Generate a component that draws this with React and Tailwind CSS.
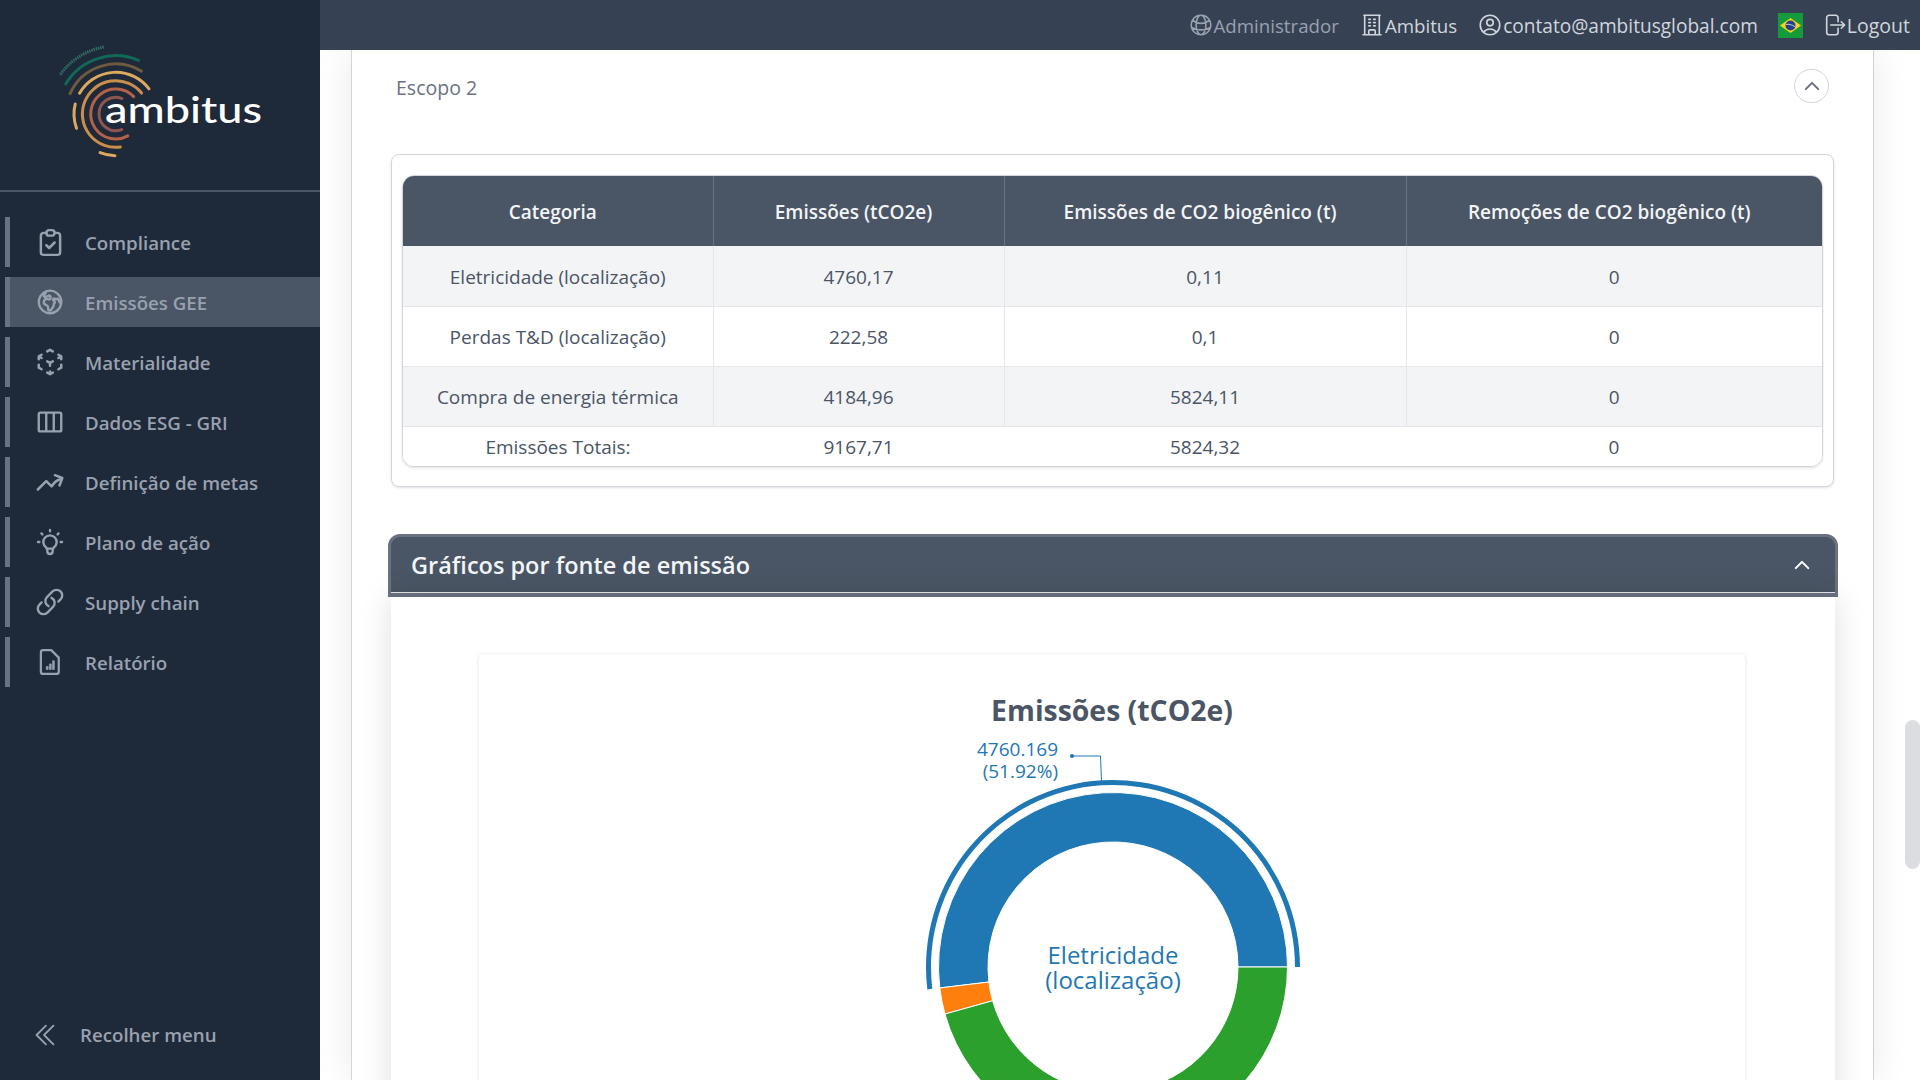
import React from "react";
import {
  HiOutlineGlobeEuropeAfrica,
  HiOutlineCubeTransparent,
  HiOutlineViewColumns,
  HiOutlineArrowTrendingUp,
  HiOutlineLink,
  HiOutlineChevronDoubleLeft,
  HiOutlineGlobeAlt,
  HiOutlineBuildingOffice,
  HiOutlineUserCircle,
  HiOutlineArrowRightOnRectangle,
  HiOutlineChevronUp,
} from "react-icons/hi2";
import { TbBulb, TbClipboardCheck } from "react-icons/tb";

function ReportIcon({ size, className }) {
  return (
    <svg width={size} height={size} viewBox="0 0 24 24" fill="none" stroke="currentColor" strokeWidth="1.8" strokeLinejoin="round" className={className}>
      <path d="M6.5 2.5h6.5l6 6v11.2a1.8 1.8 0 0 1-1.8 1.8H6.5a1.8 1.8 0 0 1-1.8-1.8V4.300a1.800 1.800 0 0 1 1.800-1.800z" />
      <path d="M9 15.500h1.500v2.500H9zM11.500 13.500H13V18h-1.500zM14 11h1.500v7H14z" fill="currentColor" strokeWidth="0.5" />
    </svg>
  );
}

const menu = [
  { label: "Compliance", Icon: TbClipboardCheck, size: 33, stroke: 1.8 },
  { label: "Emissões GEE", Icon: HiOutlineGlobeEuropeAfrica, size: 30, stroke: 1.9 },
  { label: "Materialidade", Icon: HiOutlineCubeTransparent, size: 30, stroke: 2 },
  { label: "Dados ESG - GRI", Icon: HiOutlineViewColumns, size: 30, stroke: 1.9 },
  { label: "Definição de metas", Icon: HiOutlineArrowTrendingUp, size: 30, stroke: 2 },
  { label: "Plano de ação", Icon: TbBulb, size: 32, stroke: 1.8 },
  { label: "Supply chain", Icon: HiOutlineLink, size: 30, stroke: 1.9 },
  { label: "Relatório", Icon: ReportIcon, size: 30 },
];

const rows = [
  ["Eletricidade (localização)", "4760,17", "0,11", "0"],
  ["Perdas T&D (localização)", "222,58", "0,1", "0"],
  ["Compra de energia térmica", "4184,96", "5824,11", "0"],
];

function polar(cx, cy, r, deg) {
  const a = (deg * Math.PI) / 180;
  return [cx + r * Math.cos(a), cy - r * Math.sin(a)];
}

// arc going counter-clockwise from a0 to a1 (degrees, 0 = right)
function arc(cx, cy, r, a0, a1) {
  const [x0, y0] = polar(cx, cy, r, a0);
  const [x1, y1] = polar(cx, cy, r, a1);
  const large = a1 - a0 > 180 ? 1 : 0;
  return `M${x0} ${y0}A${r} ${r} 0 ${large} 0 ${x1} ${y1}`;
}

function sector(cx, cy, r0, r1, a0, a1) {
  const [x0, y0] = polar(cx, cy, r1, a0);
  const [x1, y1] = polar(cx, cy, r1, a1);
  const [x2, y2] = polar(cx, cy, r0, a1);
  const [x3, y3] = polar(cx, cy, r0, a0);
  const large = a1 - a0 > 180 ? 1 : 0;
  return `M${x0} ${y0}A${r1} ${r1} 0 ${large} 0 ${x1} ${y1}L${x2} ${y2}A${r0} ${r0} 0 ${large} 1 ${x3} ${y3}Z`;
}

function Logo() {
  const cx = 65.7;
  const cy = 74;
  const arcs = [
    [16.7, 68, 291, "#8f5651"],
    [25, 44, 299, "#b4614a"],
    [33.3, 39, 278, "#c98f4d"],
    [41.7, 37, 150, "#dca95f"],
    [41.7, 166, 200, "#dca95f"],
    [41.7, 248, 269, "#dca95f"],
    [50, 59, 156, "#6e5a3f"],
    [58.3, 67, 149, "#0f6a58"],
  ];
  return (
    <svg width="230" height="125" viewBox="0 0 230 125" className="block">
      {arcs.map(([r, a0, a1, color], i) => (
        <path key={i} d={arc(cx, cy, r, a0, a1)} fill="none" stroke={color} strokeWidth="3" strokeLinecap="round" />
      ))}
      <path d={arc(cx, cy, 68, 100, 145)} fill="none" stroke="#2f6e62" strokeWidth="3" strokeDasharray="1.5 0.8" />
      <text x="55" y="83" textLength="157" lengthAdjust="spacingAndGlyphs" fill="#ffffff" fontSize="36" fontWeight="500" fontFamily="Lato, sans-serif">
        ambitus
      </text>
    </svg>
  );
}

function Flag() {
  return (
    <svg width="25" height="25" viewBox="0 0 25 25" className="block">
      <rect width="25" height="25" fill="#169b3c" />
      <polygon points="12.5,5 23,12.5 12.5,20 2,12.5" fill="#f7d417" />
      <circle cx="12.5" cy="12.5" r="5" fill="#25408f" />
      <path d="M8 11.5c3-.6 6 .2 9 2.2" stroke="#e8eef5" strokeWidth="0.8" fill="none" />
    </svg>
  );
}

function Donut() {
  const cx = 231;
  const cy = 232;
  return (
    <svg width="460" height="360" viewBox="0 0 460 360" className="-mt-[2px] block mx-auto">
      <path d={sector(cx, cy, 125, 174.5, 0, 186.9)} fill="#1f77b4" stroke="#ffffff" strokeWidth="1" />
      <path d={sector(cx, cy, 125, 174.5, 186.9, 195.65)} fill="#ff7f0e" stroke="#ffffff" strokeWidth="1" />
      <path d={sector(cx, cy, 125, 174.5, 195.65, 360)} fill="#2ca02c" stroke="#ffffff" strokeWidth="1" />
      <path d={sector(cx, cy, 182, 187, 0, 186.9)} fill="#1f77b4" />
      <circle cx="190" cy="21" r="2" fill="#1f77b4" />
      <path d="M190 21H218.5L219.5 46" fill="none" stroke="#1f77b4" strokeWidth="1" />
      <g fill="#1f77b4" fontFamily="'Open Sans', sans-serif">
        <text textAnchor="end" fontSize="19">
          <tspan x="176" y="21">4760.169</tspan>
          <tspan x="176" y="43">(51.92%)</tspan>
        </text>
        <text textAnchor="middle" fontSize="24">
          <tspan x={cx} y="229">Eletricidade</tspan>
          <tspan x={cx} y="254">(localização)</tspan>
        </text>
      </g>
    </svg>
  );
}

function ScopeTable() {
  return (
    <div className="overflow-hidden rounded-xl border border-gray-300 shadow-sm">
      <table className="w-full table-fixed border-collapse text-center text-[19px] text-gray-600">
        <colgroup>
          <col className="w-[310px]" />
          <col className="w-[291px]" />
          <col className="w-[402px]" />
          <col />
        </colgroup>
        <thead>
          <tr className="h-[70px] bg-gray-600 text-gray-100">
            <th className="border-r border-gray-500 pt-[3px] pr-[10px] font-semibold">Categoria</th>
            <th className="border-r border-gray-500 pt-[3px] pr-[10px] font-semibold">Emissões (tCO2e)</th>
            <th className="border-r border-gray-500 pt-[3px] pr-[10px] font-semibold">Emissões de CO2 biogênico (t)</th>
            <th className="pt-[3px] pr-[10px] font-semibold">Remoções de CO2 biogênico (t)</th>
          </tr>
        </thead>
        <tbody>
          {rows.map((row, i) => (
            <tr key={row[0]} className={`h-[60px] border-b border-gray-200 ${i % 2 === 0 ? "bg-gray-100" : "bg-white"}`}>
              {row.map((cell, j) => (
                <td key={j} className={j < 3 ? "border-r border-gray-200 pt-[2px]" : "pt-[2px]"}>{cell}</td>
              ))}
            </tr>
          ))}
          <tr className="h-[40px] bg-white">
            <td className="pt-[2px]">Emissões Totais:</td>
            <td className="pt-[2px]">9167,71</td>
            <td className="pt-[2px]">5824,32</td>
            <td className="pt-[2px]">0</td>
          </tr>
        </tbody>
      </table>
    </div>
  );
}

export default function App() {
  return (
    <div className="flex h-screen w-screen overflow-hidden bg-white font-['Open_Sans',sans-serif]">
      <aside className="flex h-full w-[320px] shrink-0 flex-col bg-gray-800">
        <div className="h-[192px] shrink-0 border-b-2 border-gray-600 pt-[40px] pl-[50px]">
          <Logo />
        </div>
        <nav className="flex flex-col gap-[10px] pt-[25px] pl-[5px]">
          {menu.map(({ label, Icon, size, stroke }) => (
            <a
              key={label}
              className={`flex h-[50px] items-center gap-[20px] border-l-[5px] border-gray-500 pl-[25px] text-[18.7px] font-semibold text-gray-400 ${label === "Emissões GEE" ? "bg-gray-600" : ""}`}
            >
              <span className="flex w-[30px] shrink-0 justify-center">
                <Icon size={size} strokeWidth={stroke} className="shrink-0 text-gray-400" />
              </span>
              <span className="pt-[2px]">{label}</span>
            </a>
          ))}
        </nav>
        <button className="mt-auto mb-[30px] flex items-center gap-[20px] pl-[30px] text-[18.7px] font-semibold text-gray-400">
          <HiOutlineChevronDoubleLeft className="h-[30px] w-[30px]" />
          Recolher menu
        </button>
      </aside>

      <div className="flex min-w-0 flex-1 flex-col">
        <header className="flex h-[50px] shrink-0 items-center justify-end gap-[20px] bg-gray-700 pr-[10px] text-[18.7px] text-gray-300">
          <span className="flex items-center text-gray-400">
            <HiOutlineGlobeAlt className="h-[26px] w-[26px]" />
            <span className="pt-[2px]">Administrador</span>
          </span>
          <span className="flex items-center">
            <HiOutlineBuildingOffice className="h-[26px] w-[26px]" />
            <span className="pt-[2px]">Ambitus</span>
          </span>
          <span className="flex items-center">
            <HiOutlineUserCircle className="h-[26px] w-[26px]" />
            <span className="pt-[2px] text-[19.1px]">contato@ambitusglobal.com</span>
          </span>
          <Flag />
          <span className="-ml-[2px] flex items-center">
            <HiOutlineArrowRightOnRectangle className="h-[26px] w-[26px]" />
            <span className="pt-[2px] text-[19.5px]">Logout</span>
          </span>
        </header>

        <main className="relative min-h-0 flex-1 overflow-hidden pr-[46px] pl-[31px]">
          <div className="h-full border-x border-gray-300 bg-white px-[39px] shadow-[0_0_34px_rgba(0,0,0,0.09)]">
            <div className="flex items-center justify-between pt-[19px] pr-[5px] pb-[51px] pl-[5px]">
              <span className="pt-[3px] text-[19.5px] font-medium text-gray-500">Escopo 2</span>
              <button className="flex h-[34px] w-[35px] items-center justify-center rounded-full border border-gray-300">
                <HiOutlineChevronUp className="h-[20px] w-[20px] text-gray-500" strokeWidth={2.5} />
              </button>
            </div>

            <div className="rounded-lg border border-gray-300 px-[10px] pt-[20px] pb-[19px] shadow-sm">
              <ScopeTable />
            </div>

            <section className="mt-[47px] -mr-[4px] -ml-[3px]">
              <div className="rounded-t-xl border-x-[3px] border-t-[3px] border-b-[4px] border-gray-500 bg-gray-600">
                <div className="flex h-[56px] items-center justify-between border-b border-gray-200 pr-[23px] pl-[20px]">
                  <h2 className="pt-[2px] text-[23.5px] font-semibold text-gray-100">Gráficos por fonte de emissão</h2>
                  <HiOutlineChevronUp className="h-[20px] w-[20px] text-white" strokeWidth={2.5} />
                </div>
              </div>
              <div className="mx-[3px] bg-white pt-[56px] pr-[89px] pl-[87px] shadow-[0_0_30px_rgba(0,0,0,0.13)]">
                <div className="h-[700px] rounded-md border border-gray-100 pt-[29px] shadow-sm">
                  <h3 className="text-center text-[28.4px] leading-[54px] font-bold text-gray-600">Emissões (tCO2e)</h3>
                  <Donut />
                </div>
              </div>
            </section>
          </div>

          <div className="absolute top-[670px] right-0 h-[149px] w-[15px] rounded-full bg-[#dcdde0]" />
        </main>
      </div>
    </div>
  );
}
